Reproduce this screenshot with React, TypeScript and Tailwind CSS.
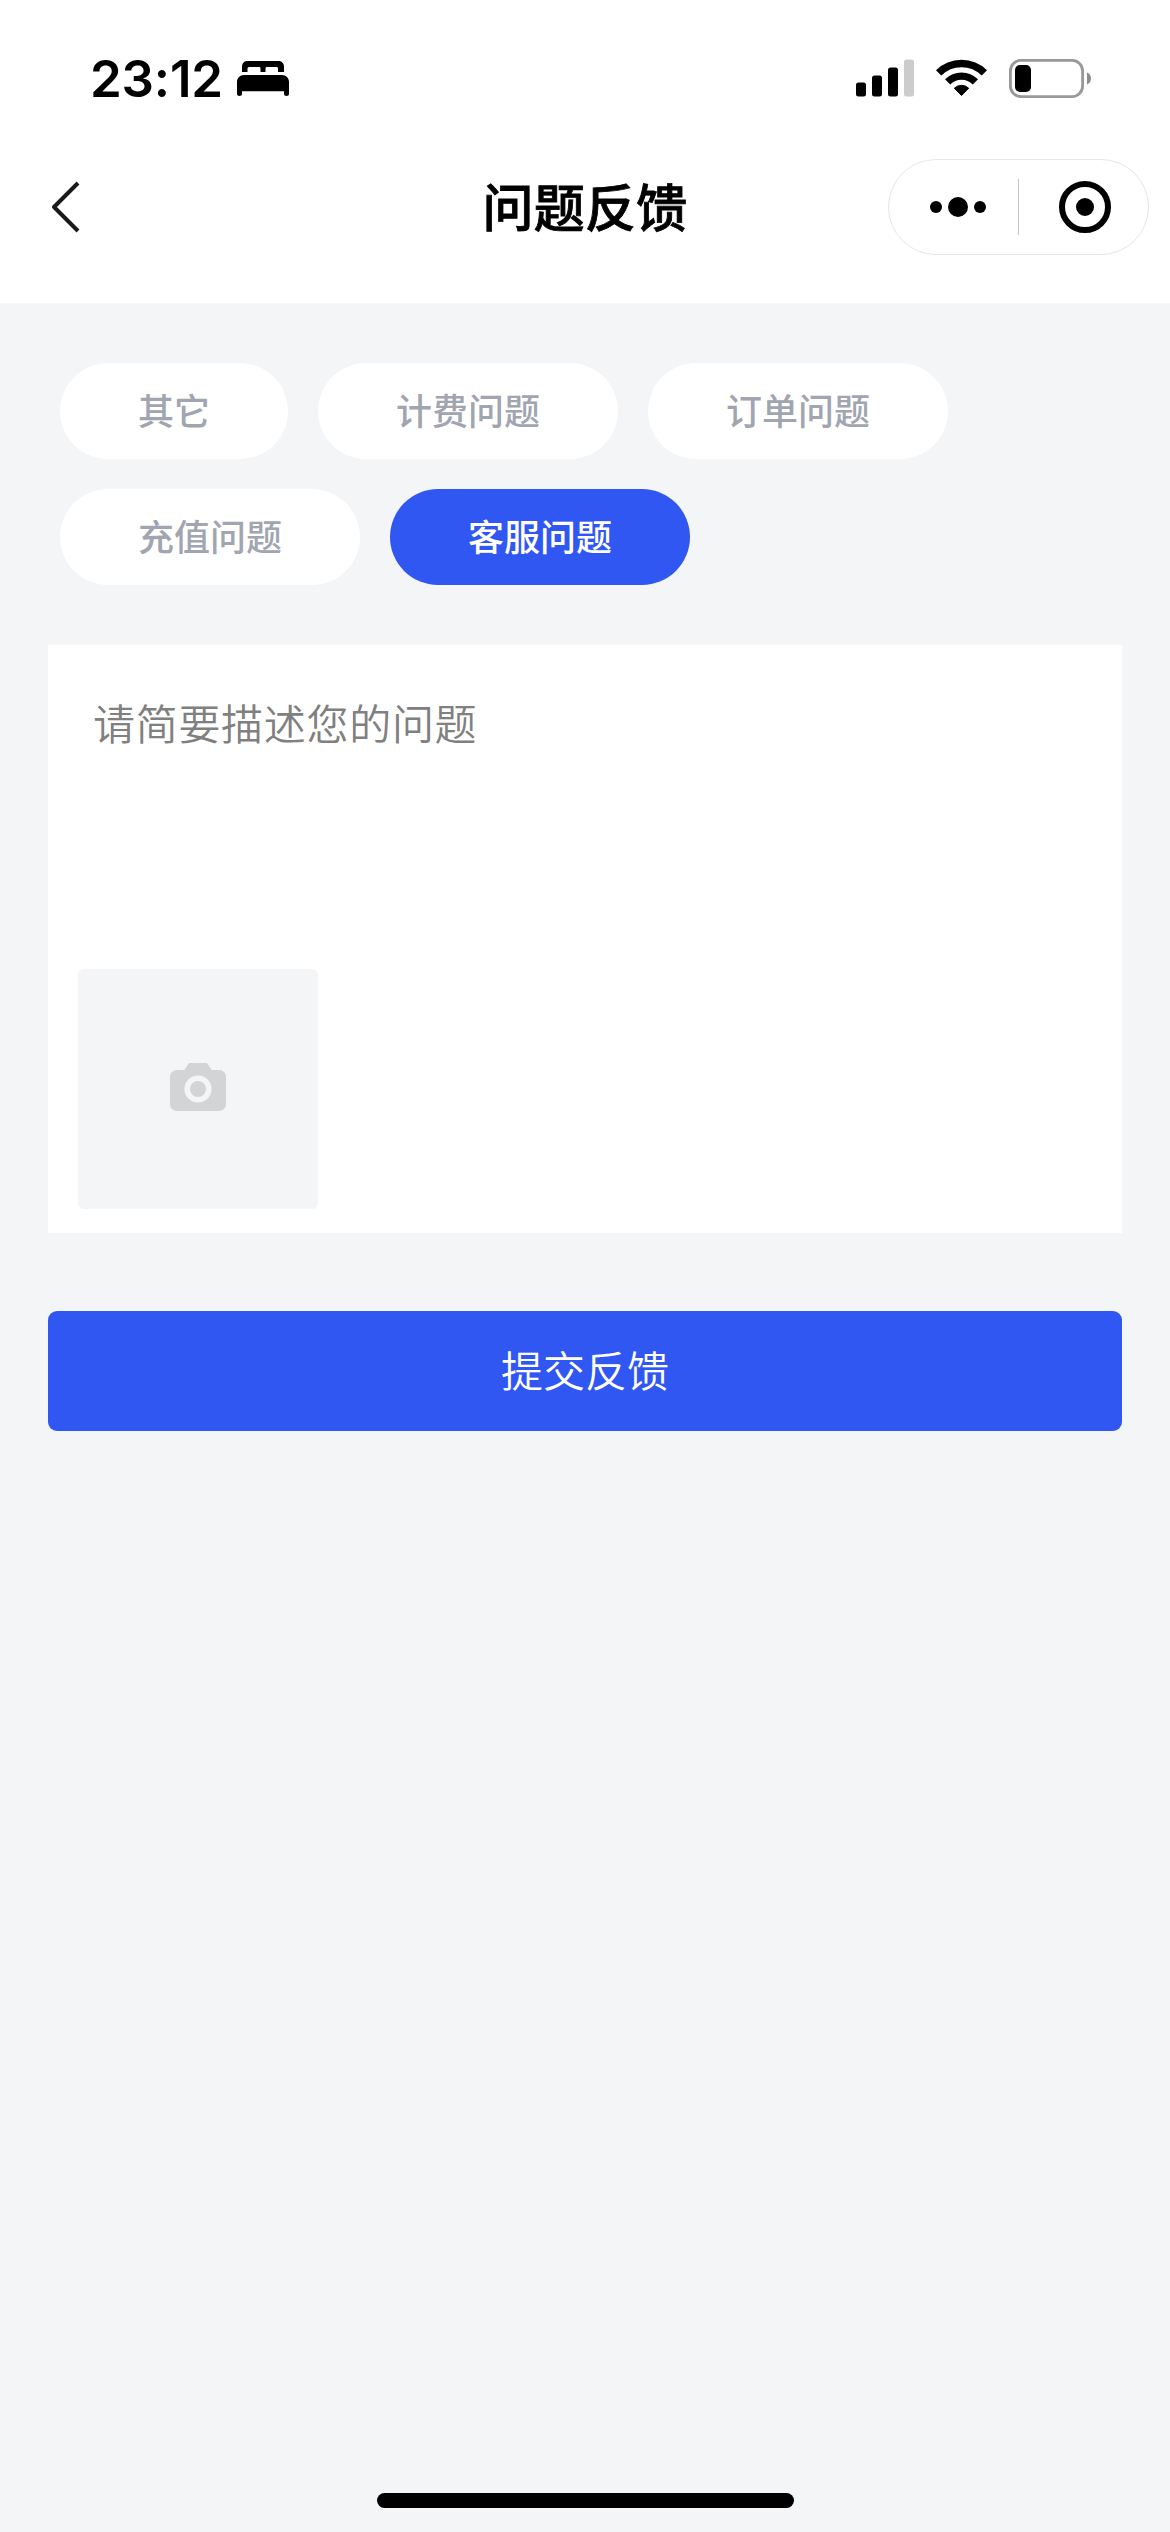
import { useState } from "react";

const categories = ["其它", "计费问题", "订单问题", "充值问题", "客服问题"];

const StatusBar = () => (
  <div className="flex h-[141px] items-center justify-between pt-[15px] pr-[78px] pl-[90px]">
    <div className="flex items-center">
      <span className="w-[147px] font-['Inter',sans-serif] text-[51px] leading-none font-semibold tracking-[-0.2px] whitespace-nowrap">
        23:12
      </span>
      <svg width="52" height="36" viewBox="0 0 52 36" fill="#000">
        <path d="M5 12V6.500C5 3 7.500 1 10.500 1H41.500C44.500 1 47 3 47 6.500V12H41V8.500C41 7.500 40.300 7 39.500 7H30C29 7 28.500 7.500 28.500 8.500V12H23.500V8.500C23.500 7.500 23 7 22 7H12.500C11.500 7 10.500 7.500 10.500 8.500V12Z" />
        <path d="M0 22C0 18 3 15 7 15H45C49 15 52 18 52 22V34C52 35.300 51 36 49.500 36C48 36 47 35.300 47 34V31.200H5V34C5 35.300 4 36 2.500 36C1 36 0 35.300 0 34Z" />
      </svg>
    </div>
    <div className="flex items-center">
      <svg width="58" height="38" viewBox="0 0 58 38">
        <rect x="0" y="23.500" width="10" height="14" rx="2.500" />
        <rect x="16" y="16.500" width="10" height="21" rx="2.500" />
        <rect x="32" y="8.500" width="10" height="29" rx="2.500" />
        <rect x="48" y="0.500" width="10" height="37" rx="2.500" fill="#ccc" />
      </svg>
      <svg className="ml-[22px]" width="51" height="38" viewBox="0 0 51 38">
        <path d="M2.600 13.900A32.400 32.400 0 0 1 48.400 13.900" fill="none" stroke="#000" strokeWidth="7.500" />
        <path d="M11.600 22.900A19.600 19.600 0 0 1 39.400 22.900" fill="none" stroke="#000" strokeWidth="7.300" />
        <path d="M18.300 29.200A10.500 10.500 0 0 1 32.700 29.200L25.500 36.500Z" stroke="#000" strokeLinejoin="round" />
      </svg>
      <svg className="ml-[22px]" width="83" height="39" viewBox="0 0 83 39">
        <rect x="1.400" y="1.400" width="72.200" height="36.200" rx="10.500" fill="none" stroke="#999" strokeWidth="2.800" />
        <rect x="6" y="6" width="16" height="27" rx="5" />
        <path d="M78 13.500C80.500 14.500 82 16.800 82 19.500S80.500 24.500 78 25.500Z" fill="#8c8c8c" />
      </svg>
    </div>
  </div>
);

const NavBar = () => (
  <div className="grid h-[132px] grid-cols-[1fr_auto_1fr] items-center pr-[21px] pl-[51px]">
    <button className="w-fit" aria-label="返回">
      <svg width="30" height="52" viewBox="0 0 30 52" fill="none">
        <path d="M27 2L3 26L27 50" stroke="#1a1a1a" strokeWidth="4" strokeLinejoin="round" />
      </svg>
    </button>
    <h1 className="mr-[30px] pb-[3px] text-[51px] leading-none font-medium tracking-[0.3px] [-webkit-text-stroke:0.8px_black]">
      问题反馈
    </h1>
    <div className="flex h-24 w-[261px] items-center justify-self-end rounded-full border border-[#e6e6e6]">
      <button className="flex w-[129px] items-center justify-center gap-1.5 pl-2" aria-label="更多">
        <span className="size-3 rounded-full bg-black" />
        <span className="size-5 rounded-full bg-black" />
        <span className="size-3 rounded-full bg-black" />
      </button>
      <span className="h-14 w-px bg-[#c4c4c4]" />
      <button className="flex flex-1 justify-center pl-0.5" aria-label="关闭">
        <span className="flex size-[52px] items-center justify-center rounded-full border-[6px] border-black">
          <span className="size-[18px] rounded-full bg-black" />
        </span>
      </button>
    </div>
  </div>
);

const App = () => {
  const [active, setActive] = useState("客服问题");

  return (
    <div className="flex h-[2532px] w-[1170px] flex-col bg-[#f4f5f7] font-['Noto_Sans_CJK_SC',sans-serif] text-black">
      <header className="h-[303px] bg-white">
        <StatusBar />
        <NavBar />
      </header>

      <main className="flex flex-1 flex-col px-12 pt-[60px]">
        <div className="flex flex-wrap gap-[30px] px-3">
          {categories.map((item) => (
            <button
              key={item}
              onClick={() => setActive(item)}
              className={
                item === active
                  ? "h-24 rounded-full bg-[#3157f3] px-[78px] pb-1 text-4xl font-medium text-white"
                  : "h-24 rounded-full bg-white px-[78px] pb-1 text-4xl font-medium text-[#a0a5b0]"
              }
            >
              {item}
            </button>
          ))}
        </div>

        <div className="mt-[60px] flex h-[588px] flex-col justify-between bg-white px-[30px] pt-[47px] pb-6">
          <textarea
            className="h-[200px] resize-none px-[15px] text-[42px] leading-[60px] font-[350] tracking-[0.7px] outline-none placeholder:text-[#808080]"
            placeholder="请简要描述您的问题"
          />
          <button className="flex size-60 items-center justify-center rounded-md bg-[#f4f5f7]" aria-label="上传图片">
            <svg width="60" height="60" viewBox="0 0 60 60" fill="none">
              <path
                d="M21.500 4H38.500L43 11H49.500C54 11 56.700 14 56.700 18V45C56.700 49 54 52 49.500 52H10.500C6 52 3.300 49 3.300 45V18C3.300 14 6 11 10.500 11H17Z"
                transform="translate(-1.500 0) scale(1.050 1)"
                fill="#d3d4d6"
              />
              <circle cx="30" cy="30" r="10.800" stroke="#f4f5f7" strokeWidth="5.600" />
            </svg>
          </button>
        </div>

        <button className="mt-[78px] h-[120px] rounded-[9px] bg-[#3157f3] pb-[5px] text-[42px] font-[350] text-white">
          提交反馈
        </button>
      </main>

      <div className="mx-auto mb-6 h-[15px] w-[417px] rounded-full bg-black" />
    </div>
  );
};

export default App;
